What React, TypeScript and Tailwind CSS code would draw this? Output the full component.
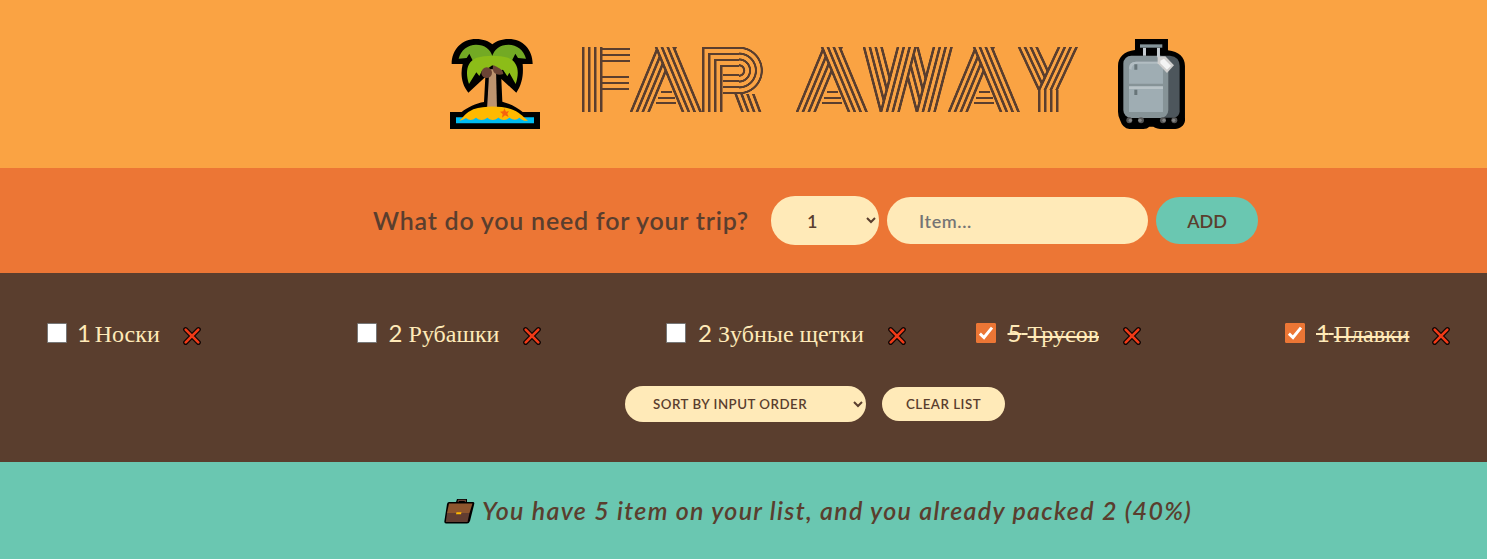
import React from "react";

const INK = "#5a3e2e";
const PAPER = "#faa343";
const CAP = 65;

function box(image: string, x: number, y: number, w: number, h: number) {
  return `${image} ${x}px ${y}px / ${w}px ${h}px no-repeat`;
}

function solid(x: number, y: number, w: number, h: number) {
  return box(`linear-gradient(${INK}, ${INK})`, x, y, w, h);
}

/* A vertical line with a softened right edge. */
function post(x: number, y: number, h: number) {
  return box(`linear-gradient(90deg, ${INK} 2px, ${INK}80 2px)`, x, y, 3, h);
}

/* Four parallel slanted lines. `foot` is where the first one meets the box's
   bottom (lean > 0, "\") or its top (lean < 0, "/"). */
function band(lean: number, foot: number, x: number, y: number, w: number, h: number) {
  const phi = Math.atan(Math.abs(lean) / h);
  const c = Math.cos(phi);
  const deg = lean > 0 ? 90 - (phi * 180) / Math.PI : 90 + (phi * 180) / Math.PI;
  const start = foot * c;
  const step = 5.85 * c;
  const line = 1.9;
  const soft = 0.7;
  const stops = [`transparent ${start - soft}px`];
  for (let i = 0; i < 4; i++) {
    const a = start + i * step;
    stops.push(`${INK} ${a}px ${a + line}px`);
    if (i < 3) stops.push(`${PAPER} ${a + line + soft}px ${a + step - soft}px`);
  }
  stops.push(`transparent ${start + 3 * step + line + soft}px`);
  return box(`linear-gradient(${deg}deg, ${stops.join(", ")})`, x, y, w, h);
}

const K = [0, 1, 2, 3];
const P = 5.85;

const F = [
  ...K.map((i) => post(Math.round(i * P), 0, CAP)),
  ...K.slice(0, 3).map((i) => solid(18, 1 + i * P, 30, 2)),
  ...K.slice(0, 3).map((i) => solid(18, 29 + i * P, 29, 2)),
].join(", ");

const A = [
  band(27, 52, 0, 0, 73, CAP),
  band(-27, 27, 0, 0, 73, CAP),
  solid(31, 43.5, 11, 2.4),
  solid(28, 49.5, 17, 2.4),
  solid(26, 55, 20, 2.4),
].join(", ");

const rings =
  "radial-gradient(circle at 0 50%, transparent 3.3px, " +
  K.map((i) => {
    const r = 4.4 + i * P;
    return `${i ? PAPER : "transparent"} ${r - 0.6}px, ${INK} ${r}px ${r + 1.6}px, ${i < 3 ? PAPER : "transparent"} ${r + 2.2}px`;
  }).join(", ") +
  ")";

const R = [
  ...K.map((i) => post(Math.round(i * P), Math.round(i * P), CAP - i * P)),
  ...K.map((i) => solid(i * P, Math.round(i * P), 37 - i * P, 2)),
  ...K.map((i) => solid(21, 45 - Math.round(i * P), 16, 2)),
  box(rings, 37, 0, 25, 47),
  band(6.8, 39.5, 0, 47, 62, 18),
].join(", ");

const W = [
  band(-17, 70, 0, 0, 91, CAP),
  band(-17, 34, 0, 0, 91, CAP),
  band(17, 53, 0, 0, 91, CAP),
  band(17, 17, 0, 0, 91, CAP),
].join(", ");

const Y = [
  band(-20, 41, 0, 0, 62, 43),
  band(20, 21, 0, 0, 62, 43),
  ...K.map((i) => post(Math.round(21 + i * P), 43, 22)),
].join(", ");

const letters = [
  { ch: "F", art: F, cls: "w-[48px]" },
  { ch: "A", art: A, cls: "w-[73px]" },
  { ch: "R", art: R, cls: "w-[62px] -ml-px" },
  { ch: " ", art: "none", cls: "w-[32px]" },
  { ch: "A", art: A, cls: "w-[73px]" },
  { ch: "W", art: W, cls: "w-[91px] -ml-[6px]" },
  { ch: "A", art: A, cls: "w-[73px] -ml-[6px]" },
  { ch: "Y", art: Y, cls: "w-[62px] -ml-[4px]" },
];

function Title() {
  return (
    <h1 className="mt-[47px] ml-[42px] flex font-['Inter',sans-serif] text-[82px] leading-[65px] font-black whitespace-pre text-transparent">
      {letters.map((l, i) => (
        <span
          key={i}
          className={`flex h-[65px] shrink-0 justify-center [-webkit-text-stroke:18px_transparent] ${l.cls}`}
          style={{ background: l.art, backgroundClip: "text", WebkitBackgroundClip: "text" }}
        >
          {l.ch}
        </span>
      ))}
    </h1>
  );
}

function Island() {
  return (
    <svg viewBox="30 27 270 270" className="mt-[39px] h-[90px] w-[90px] shrink-0">
      <path d="M35 102C35 58 66 27 108 27C130 27 147 34 157 43C168 34 184 27 206 27C248 27 278 58 278 102H248C251 135 246 163 229 188L184 147L187 215C210 221 234 234 248 246H300V297H30V246H65C82 232 108 220 132 216L136 141L85 188C64 163 61 132 68 102Z" fill="#000" />
      <path d="M56 86C62 60 84 44 108 44C134 44 152 58 158 80V95H100L88 71L80 84Z" fill="#73aa24" />
      <path d="M258 86C252 60 230 44 206 44C180 44 162 58 156 80V95H214L226 71L234 84Z" fill="#73aa24" />
      <path d="M148 118H168L171 240H141Z" fill="#bd936e" />
      <path d="M87 162C76 130 78 96 110 83C135 75 180 75 204 83C237 96 238 130 227 162L208 128L202 139L189 119L177 122L157 106L137 120L126 122L118 138L109 127Z" fill="#8cbd18" />
      <circle cx="140" cy="128" r="16" fill="#6b4435" />
      <path d="M160 105C153 128 170 139 190 132C188 115 174 114 160 105Z" fill="#6b4435" />
      <path d="M48 262H282V280H48Z" fill="#00bcf2" />
      <path d="M58 272C70 262 76 249 100 238C140 225 190 228 220 240C244 250 252 264 264 272Q248 274 238 263Q226 275 208 263Q192 277 175 263Q158 277 142 263Q124 277 108 263Q92 276 78 264Q70 270 58 272Z" fill="#ffb900" />
      <path d="M193 235L198 245L207 243L202 251L206 261L195 256L186 263L188 252L180 245L190 244Z" fill="#f7630c" />
    </svg>
  );
}

function Luggage() {
  return (
    <svg viewBox="54 27 202 270" className="mt-[39px] ml-[39px] h-[90px] w-[67.3px] shrink-0">
      <path d="M105 27H204V61C237 65 255 82 255 108V264C258 282 243 297 226 297H190Q170 297 160 290H148Q142 297 130 297H88Q68 294 61 272Q54 260 54 245V108C54 82 72 64 105 60Z" fill="#000" />
      <path d="M170 77H210Q239 80 239 108V245Q237 260 222 263H170Z" fill="#4d565c" />
      <rect x="70" y="77" width="135" height="187" rx="24" fill="#869397" />
      <path d="M87 161V115Q87 95 108 95H189V161Z" fill="#9fadb3" />
      <path d="M87 115Q87 95 108 95H189V101H112Q94 102 94 120Z" fill="#b2bdc2" />
      <path d="M87 170H189V246H87Z" fill="#9fadb3" />
      <path d="M87 169H189V177H87Z" fill="#b9c3c7" />
      <path d="M103 103H112V119H103ZM103 179H112V195H103Z" fill="#687579" />
      <path d="M129 53H138V77H129ZM171 53H180V82H171Z" fill="#c6cdd1" />
      <path d="M120 43H187V53H120Z" fill="#849499" />
      <path d="M173 80L196 79L222 106L201 129L173 100Z" fill="#d0cfce" />
      <path d="M181 92L192 86L213 107L201 119L181 100Z" fill="#f4f4f4" />
      <g fill="#555">
        <circle cx="88" cy="271" r="9" /><circle cx="123" cy="271" r="9" />
        <circle cx="189" cy="271" r="9" /><circle cx="223" cy="271" r="9" />
      </g>
      <g fill="#858585">
        <circle cx="91" cy="271" r="5" /><circle cx="120" cy="271" r="5" />
        <circle cx="192" cy="271" r="5" /><circle cx="221" cy="271" r="5" />
      </g>
    </svg>
  );
}

function Cross() {
  return (
    <svg viewBox="0 0 18 18" className="mt-[5px] h-[18px] w-[18px]" fill="none" strokeLinecap="round">
      <path d="M2.6 2.6L15.4 15.4M15.4 2.6L2.6 15.4" stroke="#100503" strokeWidth="4.9" />
      <path d="M2.7 2.7L15.3 15.3M15.3 2.7L2.7 15.3" stroke="#f03a17" strokeWidth="2.6" />
    </svg>
  );
}

function Briefcase() {
  return (
    <svg viewBox="0 0 31 26" className="-mt-px mr-[7px] h-[26px] w-[31px]">
      <path d="M5 4H12L13 1H23L23 4H29Q31 4 30 7L26 23Q25 25.5 23 25.5H2Q0 25.5 .4 23L3 6Q3.500 4 5 4Z" fill="#000" />
      <path d="M14 4L14.500 2.400H21.500L21.300 4" fill="none" stroke="#6b4435" strokeWidth="1.1" />
      <path d="M5 5.500H28.500L25.500 15H3Z" fill="#8e562e" />
      <path d="M3 15H25.500L23.500 24H1.800Z" fill="#623d31" />
      <path d="M12.500 14.300H17.500L17 16.300H12Z" fill="#ffb900" />
    </svg>
  );
}

function Checkbox({ checked }: { checked: boolean }) {
  return (
    <span className="-mt-[2px] mr-[11px] grid h-5 w-5 shrink-0">
      <input
        type="checkbox"
        defaultChecked={checked}
        className="col-start-1 row-start-1 h-5 w-5 appearance-none rounded-[1px] border border-[#767676] bg-white checked:border-[#ec7635] checked:bg-[#ec7635]"
      />
      {checked && (
        <svg viewBox="0 0 20 20" className="pointer-events-none col-start-1 row-start-1 h-5 w-5" fill="none">
          <path d="M3.9 10.6L8 14.500L16 4.600" stroke="#fff" strokeWidth="2.9" />
        </svg>
      )}
    </span>
  );
}

const items = [
  { n: 1, name: "Носки", packed: false, w: "w-[82px]" },
  { n: 2, name: "Рубашки", packed: false, w: "w-[112px] pl-px" },
  { n: 2, name: "Зубные щетки", packed: false, w: "w-[168px] pl-px" },
  { n: 5, name: "Трусов", packed: true, w: "w-[93px] pl-px" },
  { n: 1, name: "Плавки", packed: true, w: "w-[93px] pl-px" },
];

export default function App() {
  return (
    <div className="h-[559px] w-full overflow-hidden bg-[#6ac7b1] font-['Lato',sans-serif] text-[#5a3e2e]">
      <div className="w-[1631px]">
        <header className="flex h-[168px] items-start bg-[#faa343] pl-[450px]">
          <Island />
          <Title />
          <Luggage />
        </header>

        <form className="flex h-[105px] items-center bg-[#ec7635] pl-[373px] text-[18px] font-semibold">
          <h3 className="mr-[24px] w-[374px] text-[25px] tracking-[0.77px] whitespace-nowrap">
            What do you need for your trip?
          </h3>
          <select className="mr-2 h-[49px] w-[108px] rounded-[24px] bg-[#ffeab8] px-[32px] outline-none">
            <option>1</option>
          </select>
          <input
            placeholder="Item..."
            className="mr-2 h-[47px] w-[261px] rounded-[24px] bg-[#ffeab8] px-[32px] tracking-[0.6px] outline-none placeholder:text-[#757575]"
          />
          <button type="button" className="h-[47px] w-[102px] rounded-[24px] bg-[#6ac7b1] pt-px">
            ADD
          </button>
        </form>

        <section className="h-[189px] bg-[#5a3e2e] pt-[46px] text-[#ffeab8]">
          <ul className="grid grid-cols-[repeat(5,309.5px)] pl-[47px]">
            {items.map((it, i) => (
              <li key={i} className="flex h-[29px] items-center">
                <Checkbox checked={it.packed} />
                <span
                  className={`mr-[23px] block text-[24px] leading-[29px] whitespace-nowrap ${it.w} ${it.packed ? "line-through" : ""}`}
                >
                  <span className={it.n === 1 ? "-ml-px tracking-[-1.2px]" : ""}>{it.n} </span>
                  <span className="font-['Liberation_Serif',serif]">{it.name}</span>
                </span>
                <Cross />
              </li>
            ))}
          </ul>
          <div className="mt-[38px] flex items-center pl-[625px] text-[13.3px] font-semibold text-[#5a3e2e]">
            <select className="mr-4 h-[36px] w-[241px] rounded-[18px] bg-[#ffeab8] px-[24px] tracking-[0.5px] outline-none">
              <option>SORT BY INPUT ORDER</option>
            </select>
            <button className="h-[34px] w-[123px] rounded-[17px] bg-[#ffeab8] pt-px tracking-[0.5px]">CLEAR LIST</button>
          </div>
        </section>

        <footer className="flex h-[97px] items-center bg-[#6ac7b1] pt-px pl-[444px] text-[25px] font-semibold italic">
          <Briefcase />
          <em className="tracking-[1.32px] whitespace-nowrap">
            You have 5 item on your list, and you already packed 2 (40%)
          </em>
        </footer>
      </div>
    </div>
  );
}
